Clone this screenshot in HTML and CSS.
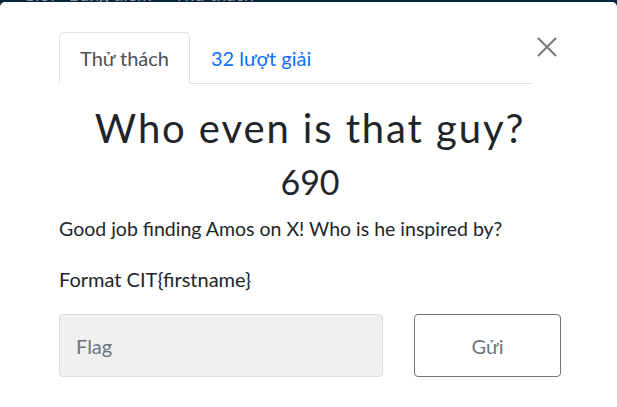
FILE: index.html
```html
<!DOCTYPE html>
<html lang="vi">
<head>
<meta charset="utf-8">
<link rel="stylesheet" href="styles.css">
</head>
<body>
<div class="navbar">
  <span class="nav-item n1">Giới</span>
  <span class="nav-item n2">Bảng điểm</span>
  <span class="nav-item n3">Thử thách</span>
</div>
<div class="modal">
  <div class="modal-header">
    <ul class="tabs">
      <li class="tab active">Thử thách</li>
      <li class="tab link">32 lượt giải</li>
    </ul>
    <button class="close" aria-label="Close">
      <svg width="20" height="20" viewBox="0 0 20 20"><path d="M1 1 L19 19 M19 1 L1 19" stroke="#7a7a7a" stroke-width="2" fill="none"/></svg>
    </button>
  </div>
  <div class="modal-body">
    <h2 class="title">Who even is that guy?</h2>
    <div class="points">690</div>
    <p class="desc">Good job finding Amos on X! Who is he inspired by?</p>
    <p class="desc fmt">Format CIT{firstname}</p>
    <div class="form-row">
      <div class="input">Flag</div>
      <button class="submit">Gửi</button>
    </div>
  </div>
</div>
</body>
</html>
```
FILE: styles.css
```css
html, body {
  margin: 0;
  padding: 0;
  height: 100%;
}
body {
  background: #0b2440;
  font-family: Lato, "Noto Sans", sans-serif;
  overflow: hidden;
}
.navbar {
  height: 2px;
  overflow: hidden;
  display: flex;
  background: #0b2440;
}
.nav-item {
  color: #8a97a8;
  font-size: 18px;
  line-height: 18px;
  margin-top: -15px;
  white-space: nowrap;
}
.n1 { margin-left: 22px; }
.n2 { margin-left: 14px; }
.n3 { margin-left: 22px; }
.modal {
  background: #fff;
  border-radius: 5px 5px 0 0;
  height: calc(100% - 2px);
  padding: 0 56px 0 59px;
  box-sizing: border-box;
}
.modal-header {
  display: flex;
  align-items: flex-start;
  padding-top: 30px;
}
.tabs {
  list-style: none;
  margin: 0;
  padding: 0;
  display: flex;
  width: 473px;
  border-bottom: 1px solid #dee2e6;
}
.tab {
  box-sizing: border-box;
  padding: 0 20px;
  font-size: 20px;
  display: flex;
  align-items: center;
  border: 1px solid transparent;
  border-radius: 5px 5px 0 0;
  margin-bottom: -1px;
  height: 52px;
}
.tab.active {
  color: #495057;
  border-color: #dee2e6 #dee2e6 #fff;
  background: #fff;
}
.tab.link {
  color: #0d6efd;
}
.close {
  margin: 5px 0 0 5px;
  padding: 0;
  border: 0;
  background: none;
  width: 20px;
  height: 20px;
  display: block;
}
.close svg { display: block; }
.modal-body {
  display: flex;
  flex-direction: column;
}
.title {
  margin: 20px 0 0;
  text-align: center;
  font-weight: 400;
  font-size: 40px;
  line-height: 48px;
  letter-spacing: 1.9px;
  color: #212529;
}
.points {
  text-align: center;
  font-size: 34px;
  line-height: 40px;
  margin-top: 10px;
  color: #212529;
}
.desc {
  margin: 14px 0 0;
  font-size: 19.5px;
  line-height: 26px;
  color: #212529;
}
.fmt {
  margin-top: 24px;
  font-size: 20px;
}
.form-row {
  display: flex;
  justify-content: space-between;
  margin-top: 22px;
}
.input {
  width: 324px;
  height: 63px;
  box-sizing: border-box;
  background: #f0f0f0;
  border: 1px solid #dcdcdc;
  border-radius: 4px;
  padding-left: 16px;
  display: flex;
  align-items: center;
  color: #6c757d;
  font-size: 20px;
}
.submit {
  width: 147px;
  height: 63px;
  box-sizing: border-box;
  background: #fff;
  border: 1px solid #6c757d;
  border-radius: 4px;
  color: #6c757d;
  font-family: Lato, "Noto Sans", sans-serif;
  font-size: 20px;
  padding: 0;
}
```
